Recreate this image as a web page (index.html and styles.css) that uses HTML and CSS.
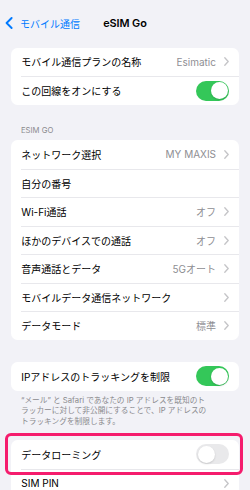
FILE: index.html
```html
<!DOCTYPE html>
<html lang="ja">
<head>
<meta charset="utf-8">
<title>eSIM Go</title>
<link rel="stylesheet" href="styles.css">
</head>
<body>
<header class="nav">
  <a class="back">
    <svg class="back-icon" width="8" height="12" viewBox="0 0 8 12"><path d="M6.6 1 L1.6 6 L6.6 11" fill="none" stroke="#007aff" stroke-width="1.9" stroke-linecap="round" stroke-linejoin="round"/></svg>
    <span>モバイル通信</span>
  </a>
  <h1 class="title">eSIM Go</h1>
  <span></span>
</header>

<section class="card card-first">
  <div class="row"><div class="row-inner"><span class="label">モバイル通信プランの名称</span><span class="value">Esimatic</span><svg class="chev" width="5" height="9" viewBox="0 0 5 9"><path d="M0.8 0.8 L4.2 4.5 L0.8 8.2" fill="none" stroke="#c4c4c7" stroke-width="1.3" stroke-linecap="round" stroke-linejoin="round"/></svg></div></div>
  <div class="row"><div class="row-inner"><span class="label">この回線をオンにする</span><span class="toggle"><span class="knob"></span></span></div></div>
</section>

<h2 class="section-title">ESIM GO</h2>
<section class="card">
  <div class="row"><div class="row-inner"><span class="label">ネットワーク選択</span><span class="value">MY MAXIS</span><svg class="chev" width="5" height="9" viewBox="0 0 5 9"><path d="M0.8 0.8 L4.2 4.5 L0.8 8.2" fill="none" stroke="#c4c4c7" stroke-width="1.3" stroke-linecap="round" stroke-linejoin="round"/></svg></div></div>
  <div class="row"><div class="row-inner"><span class="label">自分の番号</span></div></div>
  <div class="row"><div class="row-inner"><span class="label">Wi-Fi通話</span><span class="value">オフ</span><svg class="chev" width="5" height="9" viewBox="0 0 5 9"><path d="M0.8 0.8 L4.2 4.5 L0.8 8.2" fill="none" stroke="#c4c4c7" stroke-width="1.3" stroke-linecap="round" stroke-linejoin="round"/></svg></div></div>
  <div class="row"><div class="row-inner"><span class="label">ほかのデバイスでの通話</span><span class="value">オフ</span><svg class="chev" width="5" height="9" viewBox="0 0 5 9"><path d="M0.8 0.8 L4.2 4.5 L0.8 8.2" fill="none" stroke="#c4c4c7" stroke-width="1.3" stroke-linecap="round" stroke-linejoin="round"/></svg></div></div>
  <div class="row"><div class="row-inner"><span class="label">音声通話とデータ</span><span class="value">5Gオート</span><svg class="chev" width="5" height="9" viewBox="0 0 5 9"><path d="M0.8 0.8 L4.2 4.5 L0.8 8.2" fill="none" stroke="#c4c4c7" stroke-width="1.3" stroke-linecap="round" stroke-linejoin="round"/></svg></div></div>
  <div class="row"><div class="row-inner"><span class="label">モバイルデータ通信ネットワーク</span><svg class="chev" width="5" height="9" viewBox="0 0 5 9"><path d="M0.8 0.8 L4.2 4.5 L0.8 8.2" fill="none" stroke="#c4c4c7" stroke-width="1.3" stroke-linecap="round" stroke-linejoin="round"/></svg></div></div>
  <div class="row"><div class="row-inner"><span class="label">データモード</span><span class="value">標準</span><svg class="chev" width="5" height="9" viewBox="0 0 5 9"><path d="M0.8 0.8 L4.2 4.5 L0.8 8.2" fill="none" stroke="#c4c4c7" stroke-width="1.3" stroke-linecap="round" stroke-linejoin="round"/></svg></div></div>
</section>

<section class="card card-gap">
  <div class="row"><div class="row-inner"><span class="label">IPアドレスのトラッキングを制限</span><span class="toggle"><span class="knob"></span></span></div></div>
</section>
<p class="footnote">“メール” と Safari であなたの IP アドレスを既知のト<br>ラッカーに対して非公開にすることで、IP アドレスの<br>トラッキングを制限します。</p>

<section class="card card-last">
  <div class="row"><div class="row-inner"><span class="label">データローミング</span><span class="toggle off"><span class="knob"></span></span></div></div>
  <div class="row"><div class="row-inner"><span class="label">SIM PIN</span><svg class="chev" width="5" height="9" viewBox="0 0 5 9"><path d="M0.8 0.8 L4.2 4.5 L0.8 8.2" fill="none" stroke="#c4c4c7" stroke-width="1.3" stroke-linecap="round" stroke-linejoin="round"/></svg></div></div>
  <div class="highlight"></div>
</section>
</body>
</html>
```

FILE: styles.css
```css
html, body {
  margin: 0;
  padding: 0;
}
body {
  background: #f2f2f7;
  font-family: Inter, "Noto Sans CJK JP", sans-serif;
  color: #000;
  overflow: hidden;
}
.nav {
  display: grid;
  grid-template-columns: 1fr auto 1fr;
  align-items: center;
  height: 28px;
  margin-top: 9px;
  padding: 0 5px;
}
.back {
  display: flex;
  align-items: center;
  gap: 7px;
  color: #007aff;
  font-size: 10px;
}
.back-icon {
  display: block;
  flex: none;
}
.title {
  margin: 0;
  font-size: 10.9px;
  font-weight: 600;
  letter-spacing: -0.1px;
}
.card {
  background: #fff;
  border-radius: 6.5px;
  margin: 0 11px;
  position: relative;
}
.card-first {
  margin-top: 10.5px;
}
.card-gap {
  margin-top: 22.5px;
}
.row {
  height: 28.5px;
  padding-left: 10.3px;
  display: flex;
}
.row-inner {
  flex: 1;
  display: flex;
  align-items: center;
  padding-right: 10px;
  box-sizing: border-box;
}
.row + .row .row-inner {
  border-top: 1px solid #e8e8ec;
}
.label {
  flex: 1;
  font-size: 10px;
  white-space: nowrap;
}
.value {
  font-size: 10px;
  color: #8e8e93;
  margin-right: 8px;
}
.chev {
  display: block;
  flex: none;
}
.toggle {
  width: 32.7px;
  height: 20px;
  border-radius: 10px;
  background: #34c759;
  display: flex;
  align-items: center;
  justify-content: flex-end;
  padding: 1.5px;
  box-sizing: border-box;
  flex: none;
}
.toggle.off {
  background: #e9e9eb;
  justify-content: flex-start;
}
.knob {
  width: 17px;
  height: 17px;
  border-radius: 50%;
  background: #fff;
  box-shadow: 0 1px 2px rgba(0, 0, 0, 0.15);
}
.section-title {
  margin: 0;
  padding: 21px 21px 4.5px;
  font-size: 7.7px;
  line-height: 10px;
  font-weight: 400;
  color: #8a8a8e;
}
.footnote {
  margin: 0;
  padding: 5.3px 21px 13px;
  font-size: 7.7px;
  line-height: 10.4px;
  color: #8a8a8e;
  white-space: nowrap;
}
.highlight {
  position: absolute;
  left: -6px;
  top: -7px;
  width: 238.3px;
  height: 42px;
  border: 3.5px solid #f51c6d;
  border-radius: 6px;
  box-sizing: border-box;
  pointer-events: none;
}
```
